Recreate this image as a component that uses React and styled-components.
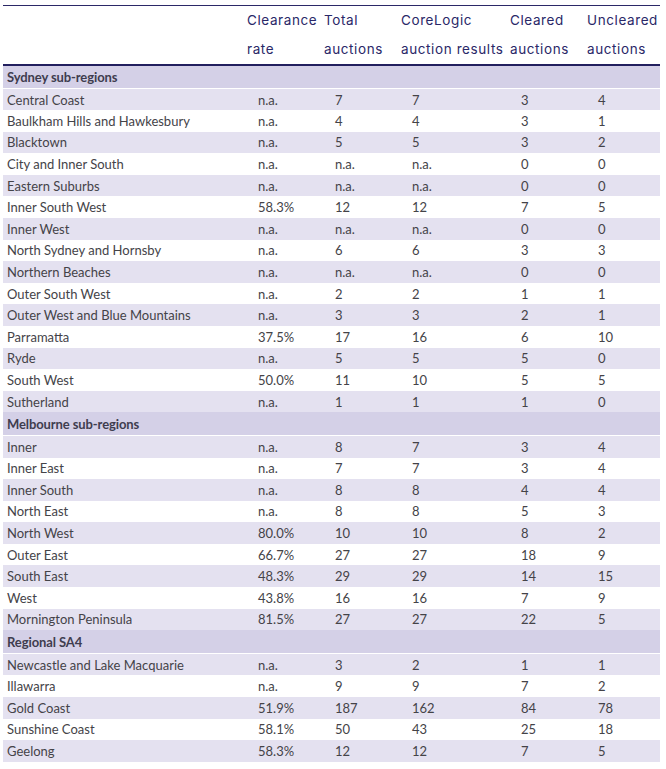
import React from "react";
import styled, { createGlobalStyle } from "styled-components";

const Global = createGlobalStyle`
  html, body { margin: 0; padding: 0; background: #ffffff; }
`;

const Page = styled.div`
  padding: 5px 6px 0 3px;
`;

const Table = styled.table`
  width: 657px;
  border-collapse: collapse;
  table-layout: fixed;
  border-top: 1px solid #2b2867;
`;

const HeadRow = styled.tr`
  height: 59.5px;
  border-bottom: 2px solid #221f5e;
`;

const Th = styled.th`
  text-align: left;
  vertical-align: top;
  padding: 0;
  font-family: Inter, "Liberation Sans", sans-serif;
  font-weight: 400;
  font-size: 13.5px;
  letter-spacing: 0.6px;
  line-height: 29px;
  color: #2a2868;
  white-space: nowrap;
`;

const SectionRow = styled.tr`
  height: 23.5px;
  background: #d4d0e7;
  border-bottom: 1px solid #ffffff;
`;

const SectionCell = styled.td`
  padding: 0 0 0 4px;
  font-family: "Source Sans Pro", Lato, "Liberation Sans", sans-serif;
  font-weight: 700;
  font-size: 13px;
  color: #3f3d4f;
  letter-spacing: -0.1px;
`;

const Row = styled.tr`
  height: 21.6px;
  background: ${(p) => (p.$shade ? "#e4e1f0" : "#ffffff")};
`;

const Td = styled.td`
  padding: 0 0 0 ${(p) => (p.$first ? "4px" : "11px")};
  font-family: "Source Sans Pro", Lato, "Liberation Sans", sans-serif;
  font-size: 13px;
  color: #444348;
  white-space: nowrap;
  vertical-align: middle;
`;

const sections = [
  {
    title: "Sydney sub-regions",
    rows: [
      ["Central Coast", "n.a.", "7", "7", "3", "4"],
      ["Baulkham Hills and Hawkesbury", "n.a.", "4", "4", "3", "1"],
      ["Blacktown", "n.a.", "5", "5", "3", "2"],
      ["City and Inner South", "n.a.", "n.a.", "n.a.", "0", "0"],
      ["Eastern Suburbs", "n.a.", "n.a.", "n.a.", "0", "0"],
      ["Inner South West", "58.3%", "12", "12", "7", "5"],
      ["Inner West", "n.a.", "n.a.", "n.a.", "0", "0"],
      ["North Sydney and Hornsby", "n.a.", "6", "6", "3", "3"],
      ["Northern Beaches", "n.a.", "n.a.", "n.a.", "0", "0"],
      ["Outer South West", "n.a.", "2", "2", "1", "1"],
      ["Outer West and Blue Mountains", "n.a.", "3", "3", "2", "1"],
      ["Parramatta", "37.5%", "17", "16", "6", "10"],
      ["Ryde", "n.a.", "5", "5", "5", "0"],
      ["South West", "50.0%", "11", "10", "5", "5"],
      ["Sutherland", "n.a.", "1", "1", "1", "0"],
    ],
  },
  {
    title: "Melbourne sub-regions",
    rows: [
      ["Inner", "n.a.", "8", "7", "3", "4"],
      ["Inner East", "n.a.", "7", "7", "3", "4"],
      ["Inner South", "n.a.", "8", "8", "4", "4"],
      ["North East", "n.a.", "8", "8", "5", "3"],
      ["North West", "80.0%", "10", "10", "8", "2"],
      ["Outer East", "66.7%", "27", "27", "18", "9"],
      ["South East", "48.3%", "29", "29", "14", "15"],
      ["West", "43.8%", "16", "16", "7", "9"],
      ["Mornington Peninsula", "81.5%", "27", "27", "22", "5"],
    ],
  },
  {
    title: "Regional SA4",
    rows: [
      ["Newcastle and Lake Macquarie", "n.a.", "3", "2", "1", "1"],
      ["Illawarra", "n.a.", "9", "9", "7", "2"],
      ["Gold Coast", "51.9%", "187", "162", "84", "78"],
      ["Sunshine Coast", "58.1%", "50", "43", "25", "18"],
      ["Geelong", "58.3%", "12", "12", "7", "5"],
    ],
  },
];

export default function App() {
  return (
    <Page>
      <Global />
      <Table>
        <colgroup>
          <col style={{ width: 244 }} />
          <col style={{ width: 77 }} />
          <col style={{ width: 77 }} />
          <col style={{ width: 109 }} />
          <col style={{ width: 77 }} />
          <col style={{ width: 73 }} />
        </colgroup>
        <thead>
          <HeadRow>
            <Th />
            <Th>Clearance<br />rate</Th>
            <Th>Total<br />auctions</Th>
            <Th>CoreLogic<br />auction results</Th>
            <Th>Cleared<br />auctions</Th>
            <Th>Uncleared<br />auctions</Th>
          </HeadRow>
        </thead>
        <tbody>
          {sections.map((s) => (
            <React.Fragment key={s.title}>
              <SectionRow>
                <SectionCell colSpan={6}>{s.title}</SectionCell>
              </SectionRow>
              {s.rows.map((r, i) => (
                <Row key={r[0]} $shade={i % 2 === 0}>
                  {r.map((c, j) => (
                    <Td key={j} $first={j === 0}>{c}</Td>
                  ))}
                </Row>
              ))}
            </React.Fragment>
          ))}
        </tbody>
      </Table>
    </Page>
  );
}
